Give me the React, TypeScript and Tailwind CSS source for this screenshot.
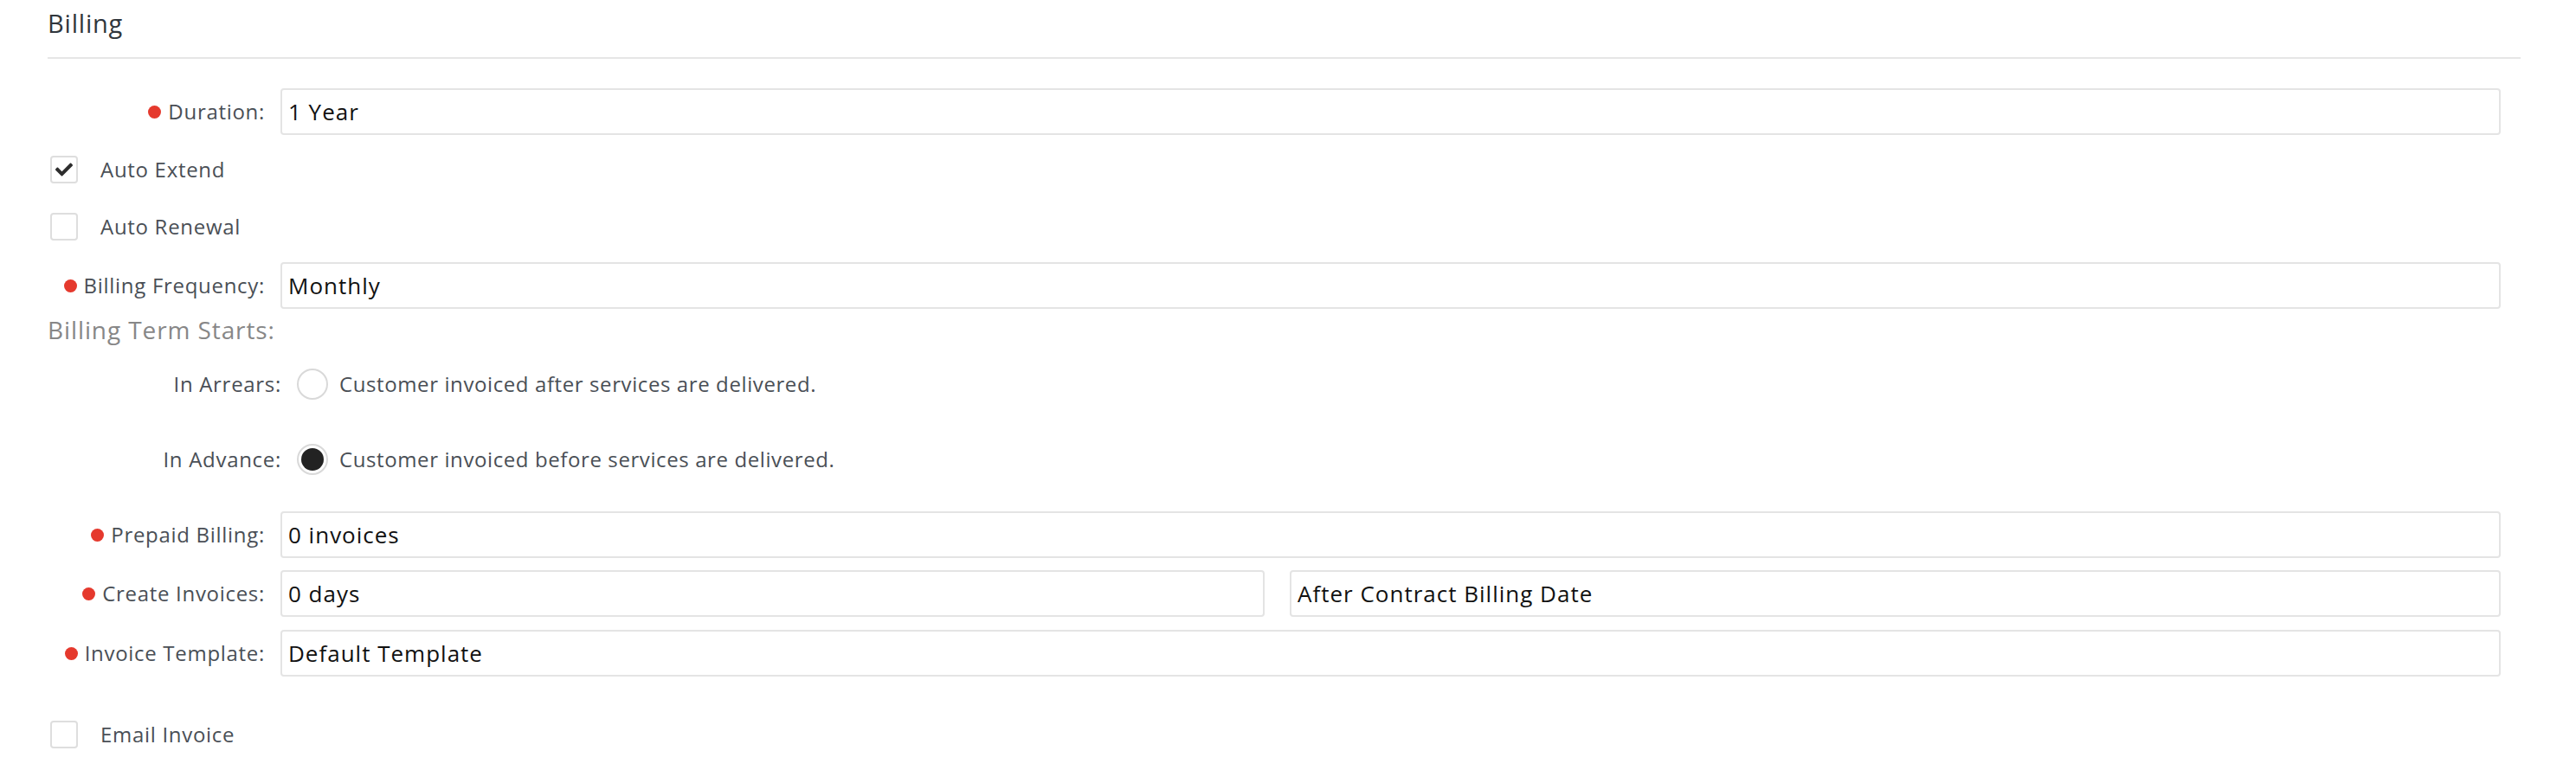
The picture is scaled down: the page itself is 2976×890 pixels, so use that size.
import { FaCheck } from "react-icons/fa";

const Dot = () => (
  <span className="mr-[8px] inline-block h-[15px] w-[15px] shrink-0 rounded-full bg-[#e5392d]" />
);

const Label = ({ text, required = true }: { text: string; required?: boolean }) => (
  <div className="flex w-[251px] shrink-0 items-center justify-end text-[24px] leading-[36px] tracking-[0.7px] text-[#4a4f56]">
    {required && <Dot />}
    <span>{text}</span>
  </div>
);

const Field = ({ value, className = "flex-1" }: { value: string; className?: string }) => (
  <div
    className={`flex h-[54px] items-center rounded-[4px] border-2 border-[#e4e4e4] bg-white px-[7px] text-[26px] tracking-[1px] text-[#111111] ${className}`}
  >
    {value}
  </div>
);

const Checkbox = ({ label, checked = false, className = "" }: { label: string; checked?: boolean; className?: string }) => (
  <div className={`flex h-[32px] items-center pl-[3px] ${className}`}>
    <div className="flex h-[32px] w-[32px] items-center justify-center rounded-[4px] border-2 border-[#dedede] bg-white">
      {checked && <FaCheck size={20} className="text-[#2d2d2d]" />}
    </div>
    <span className="ml-[26px] text-[24px] leading-[32px] tracking-[0.7px] text-[#4a4f56]">{label}</span>
  </div>
);

const Radio = ({ label, text, checked = false, className = "" }: { label: string; text: string; checked?: boolean; className?: string }) => (
  <div className={`flex h-[36px] items-center ${className}`}>
    <div className="w-[270px] shrink-0 text-right text-[24px] leading-[36px] tracking-[0.7px] text-[#4a4f56]">{label}</div>
    <div className="ml-[18px] flex h-[36px] w-[36px] shrink-0 items-center justify-center rounded-full border-2 border-[#d9d9d9] bg-white">
      {checked && <div className="h-[26px] w-[26px] rounded-full bg-[#222222]" />}
    </div>
    <span className="ml-[13px] text-[24px] leading-[36px] tracking-[0.6px] text-[#4a4f56]">{text}</span>
  </div>
);

export default function App() {
  return (
    <div className="min-h-[890px] w-[2976px] bg-white pl-[55px] pr-[64px] [font-family:'Open_Sans',sans-serif]">
      <div className="pt-[9px] text-[29px] font-medium leading-[36px] tracking-[0.8px] text-[#30363c]">Billing</div>
      <div className="mt-[21px] border-t-2 border-[#e6e6e6]" />

      <div className="mr-[23px] mt-[34px] flex items-center gap-[18px]">
        <Label text="Duration:" />
        <Field value="1 Year" />
      </div>

      <Checkbox label="Auto Extend" checked className="mt-[24px]" />
      <Checkbox label="Auto Renewal" className="mt-[34px]" />

      <div className="mr-[23px] mt-[25px] flex items-center gap-[18px]">
        <Label text="Billing Frequency:" />
        <Field value="Monthly" />
      </div>

      <div className="mt-[8px] text-[28px] leading-[32px] tracking-[0.9px] text-[#878787]">Billing Term Starts:</div>

      <Radio label="In Arrears:" text="Customer invoiced after services are delivered." className="mt-[29px]" />
      <Radio label="In Advance:" text="Customer invoiced before services are delivered." checked className="mt-[51px]" />

      <div className="mr-[23px] mt-[42px] flex items-center gap-[18px]">
        <Label text="Prepaid Billing:" />
        <Field value="0 invoices" />
      </div>

      <div className="mr-[23px] mt-[14px] flex items-center gap-[18px]">
        <Label text="Create Invoices:" />
        <div className="flex flex-1 gap-[29px]">
          <Field value="0 days" className="w-[1137px] shrink-0" />
          <Field value="After Contract Billing Date" className="flex-1" />
        </div>
      </div>

      <div className="mr-[23px] mt-[15px] flex items-center gap-[18px]">
        <Label text="Invoice Template:" />
        <Field value="Default Template" />
      </div>

      <Checkbox label="Email Invoice" className="mt-[51px]" />
    </div>
  );
}
